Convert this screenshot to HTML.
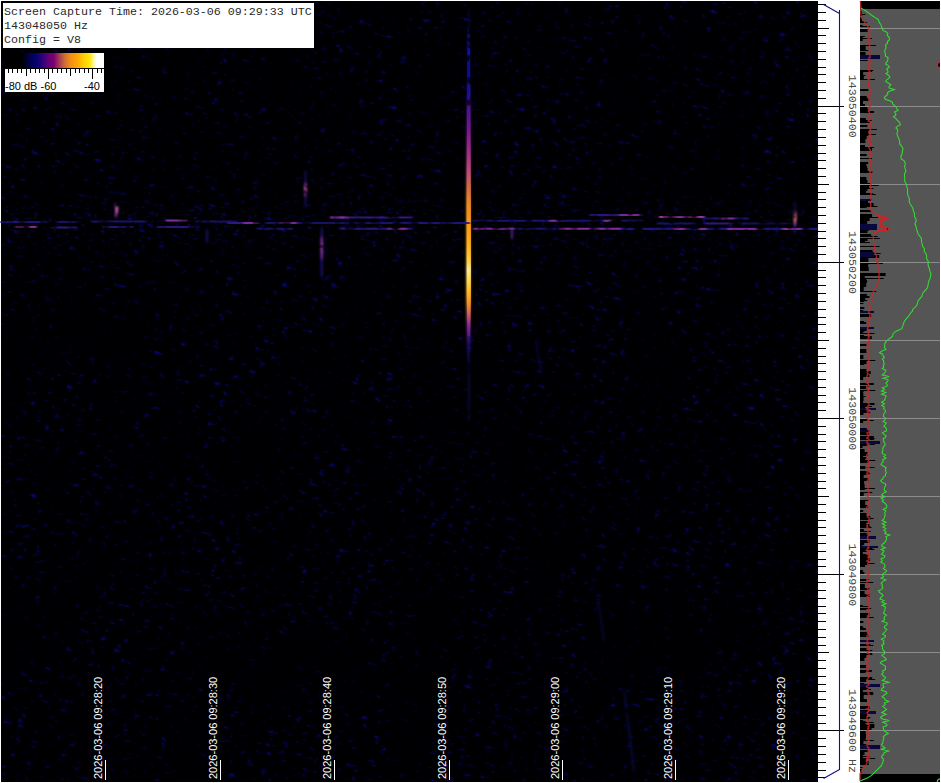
<!DOCTYPE html>
<html><head><meta charset="utf-8"><title>Spectrogram</title>
<style>
html,body{margin:0;padding:0;background:#fff;overflow:hidden}
body{width:941px;height:783px;position:relative;font-family:"Liberation Sans",sans-serif}
svg{position:absolute;left:0;top:0;display:block}
.mono{font-family:"Liberation Mono",monospace;font-size:11.67px}
.sans{font-family:"Liberation Sans",sans-serif;font-size:11px}
</style></head><body>
<svg width="941" height="783" viewBox="0 0 941 783">
<defs>
<filter id="noise" x="0" y="0" width="100%" height="100%" color-interpolation-filters="sRGB">
<feTurbulence type="fractalNoise" baseFrequency="0.125 0.22" numOctaves="3" seed="3" result="t"/>
<feColorMatrix in="t" type="matrix" values="0 0 0 0 0.03  0 0 0 0 0.03  0 0 0 0 0.58  3.3 0 0 0 -2.11" result="p"/>
<feTurbulence type="fractalNoise" baseFrequency="0.02 0.011" numOctaves="2" seed="14" result="lf"/>
<feColorMatrix in="lf" type="matrix" values="0 0 0 0 1  0 0 0 0 1  0 0 0 0 1  2.6 0 0 0 -0.55" result="m"/>
<feComposite in="p" in2="m" operator="arithmetic" k1="1" k2="0" k3="0" k4="0"/>
</filter>
<filter id="noise2" x="0" y="0" width="100%" height="100%" color-interpolation-filters="sRGB">
<feTurbulence type="fractalNoise" baseFrequency="0.15 0.24" numOctaves="3" seed="21" result="t"/>
<feColorMatrix in="t" type="matrix" values="0 0 0 0 0.06  0 0 0 0 0.04  0 0 0 0 0.5  2.8 0 0 0 -1.72"/>
</filter>
<linearGradient id="bandfade" x1="0" y1="0" x2="0" y2="1"><stop offset="0" stop-color="#fff" stop-opacity="0"/><stop offset="0.4" stop-color="#fff" stop-opacity="1"/><stop offset="0.6" stop-color="#fff" stop-opacity="1"/><stop offset="1" stop-color="#fff" stop-opacity="0"/></linearGradient>
<mask id="bandmask" maskUnits="userSpaceOnUse" x="1" y="190" width="817" height="70"><rect x="1" y="190" width="817" height="70" fill="url(#bandfade)"/></mask>
<clipPath id="specclip"><rect x="1" y="1" width="817" height="781"/></clipPath>
<filter id="b1" x="-50%" y="-50%" width="200%" height="200%"><feGaussianBlur stdDeviation="0.8"/></filter>
<filter id="b2" x="-50%" y="-50%" width="200%" height="200%"><feGaussianBlur stdDeviation="1.5"/></filter>
<filter id="bh" x="-2%" y="-100%" width="104%" height="300%" color-interpolation-filters="sRGB">
<feGaussianBlur in="SourceGraphic" stdDeviation="1.2 0.7" result="g"/>
<feTurbulence type="fractalNoise" baseFrequency="0.09 0.10" numOctaves="2" seed="8" result="n"/>
<feColorMatrix in="n" type="matrix" values="0 0 0 0 1  0 0 0 0 1  0 0 0 0 1  3.4 0 0 0 -0.85" result="m"/>
<feComposite in="g" in2="m" operator="in"/>
</filter>
<filter id="bv" x="-2%" y="-2%" width="104%" height="104%" color-interpolation-filters="sRGB">
<feGaussianBlur in="SourceGraphic" stdDeviation="0.8 1.6" result="g"/>
<feTurbulence type="fractalNoise" baseFrequency="0.10 0.12" numOctaves="2" seed="4" result="n"/>
<feColorMatrix in="n" type="matrix" values="0 0 0 0 1  0 0 0 0 1  0 0 0 0 1  3.2 0 0 0 -0.45" result="m"/>
<feComposite in="g" in2="m" operator="in"/>
</filter>
<linearGradient id="streak" gradientUnits="userSpaceOnUse" x1="0" y1="24" x2="0" y2="390">
<stop offset="0.0000" stop-color="#050530" stop-opacity="0.0"/><stop offset="0.0164" stop-color="#0c0c70" stop-opacity="0.8"/><stop offset="0.0710" stop-color="#12129a" stop-opacity="0.95"/><stop offset="0.1257" stop-color="#10108a" stop-opacity="0.85"/><stop offset="0.1803" stop-color="#18129a" stop-opacity="0.95"/><stop offset="0.2077" stop-color="#2a1088" stop-opacity="0.95"/><stop offset="0.2295" stop-color="#4a1290" stop-opacity="1"/><stop offset="0.2896" stop-color="#75188e" stop-opacity="1"/><stop offset="0.3443" stop-color="#9a2a86" stop-opacity="1"/><stop offset="0.3989" stop-color="#b8487a" stop-opacity="1"/><stop offset="0.4536" stop-color="#d4703c" stop-opacity="1"/><stop offset="0.4945" stop-color="#ea8a22" stop-opacity="1"/><stop offset="0.5492" stop-color="#f89a18" stop-opacity="1"/><stop offset="0.6038" stop-color="#ffb018" stop-opacity="1"/><stop offset="0.6503" stop-color="#ffd040" stop-opacity="1"/><stop offset="0.6721" stop-color="#ffe890" stop-opacity="1"/><stop offset="0.6995" stop-color="#ffd850" stop-opacity="1"/><stop offset="0.7322" stop-color="#ffb820" stop-opacity="1"/><stop offset="0.7678" stop-color="#f08a28" stop-opacity="1"/><stop offset="0.7951" stop-color="#c85a60" stop-opacity="1"/><stop offset="0.8224" stop-color="#8a2a90" stop-opacity="1"/><stop offset="0.8579" stop-color="#4a1890" stop-opacity="1"/><stop offset="0.8852" stop-color="#1c1080" stop-opacity="0.8"/><stop offset="0.9317" stop-color="#0c0c60" stop-opacity="0.5"/><stop offset="1.0000" stop-color="#050530" stop-opacity="0"/></linearGradient>
<linearGradient id="cbar" x1="0" y1="0" x2="1" y2="0"><stop offset="0.000" stop-color="#000000"/><stop offset="0.172" stop-color="#000000"/><stop offset="0.232" stop-color="#000040"/><stop offset="0.313" stop-color="#020272"/><stop offset="0.374" stop-color="#2c0078"/><stop offset="0.434" stop-color="#5c0078"/><stop offset="0.495" stop-color="#800070"/><stop offset="0.545" stop-color="#a03858"/><stop offset="0.596" stop-color="#c86838"/><stop offset="0.657" stop-color="#f08c18"/><stop offset="0.727" stop-color="#ffa408"/><stop offset="0.808" stop-color="#ffd400"/><stop offset="0.859" stop-color="#ffe610"/><stop offset="0.899" stop-color="#fff8b0"/><stop offset="0.929" stop-color="#ffffff"/><stop offset="1.000" stop-color="#ffffff"/></linearGradient>
</defs>
<rect x="0" y="0" width="941" height="783" fill="#ffffff"/>
<rect x="1" y="1" width="817" height="781" fill="#000002"/>
<g clip-path="url(#specclip)"><rect x="-200" y="-200" width="1300" height="1250" transform="rotate(11 409 391)" filter="url(#noise)"/></g>
<g mask="url(#bandmask)"><rect x="1" y="190" width="817" height="70" filter="url(#noise2)"/></g>
<g filter="url(#b1)" opacity=".85">
<path d="M467.4,24 L469.8,24 L470.6,110 L471.0,200 L471.0,300 L470.4,340 L469.4,388 L467.8,388 L466.8,340 L466.2,300 L466.2,200 L466.6,110 Z" fill="url(#streak)"/>
</g>
<path d="M467.8,28 L469.8,28 L470.3,100 L470.8,200 L470.8,300 L470.0,336 L467.6,336 L466.8,300 L466.6,200 L467.2,100 Z" fill="url(#streak)"/>
<ellipse cx="469.2" cy="46.1" rx="1.6" ry="2.3" fill="#000" fill-opacity="0.57"/>
<ellipse cx="467.1" cy="33.0" rx="2.2" ry="1.7" fill="#000" fill-opacity="0.43"/>
<ellipse cx="468.9" cy="103.7" rx="2.2" ry="2.1" fill="#000" fill-opacity="0.57"/>
<ellipse cx="469.5" cy="39.4" rx="2.2" ry="2.1" fill="#000" fill-opacity="0.61"/>
<ellipse cx="467.3" cy="79.0" rx="2.1" ry="2.3" fill="#000" fill-opacity="0.46"/>
<ellipse cx="470.5" cy="30.4" rx="1.8" ry="2.5" fill="#000" fill-opacity="0.66"/>
<ellipse cx="470.7" cy="82.3" rx="1.7" ry="2.6" fill="#000" fill-opacity="0.51"/>
<ellipse cx="470.5" cy="99.1" rx="1.3" ry="1.4" fill="#000" fill-opacity="0.43"/>
<ellipse cx="468.7" cy="101.4" rx="2.0" ry="1.7" fill="#000" fill-opacity="0.53"/>
<ellipse cx="468.4" cy="57.3" rx="1.9" ry="2.3" fill="#000" fill-opacity="0.67"/>
<ellipse cx="470.7" cy="79.8" rx="2.2" ry="3.0" fill="#000" fill-opacity="0.58"/>
<ellipse cx="470.4" cy="40.4" rx="2.4" ry="2.8" fill="#000" fill-opacity="0.55"/>
<ellipse cx="467.8" cy="82.3" rx="2.2" ry="2.2" fill="#000" fill-opacity="0.45"/>
<ellipse cx="470.4" cy="32.8" rx="2.4" ry="1.4" fill="#000" fill-opacity="0.63"/>
<ellipse cx="467.6" cy="59.2" rx="1.6" ry="2.6" fill="#000" fill-opacity="0.66"/>
<ellipse cx="469.5" cy="31.4" rx="1.3" ry="2.5" fill="#000" fill-opacity="0.47"/>
<rect x="471.4" y="110" width="1.1" height="220" fill="#000" fill-opacity=".85"/>
<g filter="url(#bh)" fill="none" stroke-linecap="round">
<path d="M1,222 H40" stroke="#1e1680" stroke-width="2.1" stroke-opacity="0.92"/>
<path d="M16,227 H36" stroke="#8a2a9a" stroke-width="2.1" stroke-opacity="1.00"/>
<path d="M44,222 H78" stroke="#1e1680" stroke-width="2.1" stroke-opacity="0.80"/>
<path d="M52,227.5 H76" stroke="#34188a" stroke-width="2.1" stroke-opacity="0.92"/>
<path d="M92,221.5 H152" stroke="#1e1680" stroke-width="2.1" stroke-opacity="0.86"/>
<path d="M104,227 H132" stroke="#34188a" stroke-width="2.1" stroke-opacity="0.80"/>
<path d="M166,220.5 H186" stroke="#80309a" stroke-width="2.1" stroke-opacity="1.00"/>
<path d="M158,227 H192" stroke="#34188a" stroke-width="2.1" stroke-opacity="0.86"/>
<path d="M196,221.5 H236" stroke="#1e1680" stroke-width="2.1" stroke-opacity="0.80"/>
<path d="M228,223 H262" stroke="#34188a" stroke-width="2.1" stroke-opacity="0.92"/>
<path d="M244,223 H256" stroke="#7a2a9a" stroke-width="2.1" stroke-opacity="1.00"/>
<path d="M262,223 H330" stroke="#1e1680" stroke-width="2.1" stroke-opacity="0.80"/>
<path d="M280,223 H296" stroke="#7a2a9a" stroke-width="2.1" stroke-opacity="0.98"/>
<path d="M258,228.7 H292" stroke="#1e1680" stroke-width="2.1" stroke-opacity="0.80"/>
<path d="M331,217.5 H412" stroke="#34188a" stroke-width="2.1" stroke-opacity="0.98"/>
<path d="M331,217.5 H348" stroke="#8a309a" stroke-width="2.1" stroke-opacity="1.00"/>
<path d="M332,223 H470" stroke="#1e1680" stroke-width="2.1" stroke-opacity="0.86"/>
<path d="M340,228.8 H412" stroke="#34188a" stroke-width="2.1" stroke-opacity="0.86"/>
<path d="M388,228.8 H406" stroke="#7a2a9a" stroke-width="2.1" stroke-opacity="0.98"/>
<path d="M420,223 H466" stroke="#1e1680" stroke-width="2.1" stroke-opacity="0.69"/>
<path d="M473,220.7 H560" stroke="#1e1680" stroke-width="2.1" stroke-opacity="0.86"/>
<path d="M474,228.7 H514" stroke="#7a2a9a" stroke-width="2.1" stroke-opacity="1.00"/>
<path d="M550,220.7 H562" stroke="#7a2a9a" stroke-width="2.1" stroke-opacity="0.98"/>
<path d="M518,228.7 H556" stroke="#1e1680" stroke-width="2.1" stroke-opacity="0.80"/>
<path d="M560,228.7 H622" stroke="#80309a" stroke-width="2.1" stroke-opacity="1.00"/>
<path d="M562,220.7 H642" stroke="#1e1680" stroke-width="2.1" stroke-opacity="0.80"/>
<path d="M604,220.7 H616" stroke="#7a2a9a" stroke-width="2.1" stroke-opacity="0.98"/>
<path d="M590,215 H642" stroke="#34188a" stroke-width="2.1" stroke-opacity="0.86"/>
<path d="M620,215 H640" stroke="#7a2a9a" stroke-width="2.1" stroke-opacity="0.92"/>
<path d="M622,228.9 H818" stroke="#1e1680" stroke-width="2.1" stroke-opacity="0.92"/>
<path d="M660,217 H704" stroke="#7c2e9a" stroke-width="2.1" stroke-opacity="1.00"/>
<path d="M660,217 H676" stroke="#a23a9a" stroke-width="2.1" stroke-opacity="1.00"/>
<path d="M690,217 H702" stroke="#a23a9a" stroke-width="2.1" stroke-opacity="1.00"/>
<path d="M704,218.5 H748" stroke="#1e1680" stroke-width="2.1" stroke-opacity="0.92"/>
<path d="M722,218.5 H734" stroke="#7a2a9a" stroke-width="2.1" stroke-opacity="0.92"/>
<path d="M658,223.5 H694" stroke="#1e1680" stroke-width="2.1" stroke-opacity="0.80"/>
<path d="M706,223.5 H732" stroke="#34188a" stroke-width="2.1" stroke-opacity="0.92"/>
<path d="M740,223.5 H790" stroke="#1e1680" stroke-width="2.1" stroke-opacity="0.69"/>
<path d="M674,229 H686" stroke="#7a2a9a" stroke-width="2.1" stroke-opacity="1.00"/>
<path d="M698,229 H706" stroke="#7a2a9a" stroke-width="2.1" stroke-opacity="1.00"/>
<path d="M728,229 H762" stroke="#7a2a9a" stroke-width="2.1" stroke-opacity="1.00"/>
<path d="M783,229 H802" stroke="#86309a" stroke-width="2.1" stroke-opacity="1.00"/>
</g>
<g filter="url(#bv)" fill="none" stroke-linecap="round">
<path d="M305.5,172 V206" stroke="#1a1490" stroke-width="2" stroke-opacity="0.7"/>
<path d="M305.5,184 V195" stroke="#8a309a" stroke-width="2.4" stroke-opacity="0.95"/>
<path d="M305.5,187 V191" stroke="#d060a0" stroke-width="2" stroke-opacity="0.9"/>
<path d="M321.8,228 V276" stroke="#20168e" stroke-width="2.2" stroke-opacity="0.8"/>
<path d="M321.8,238 V258" stroke="#7a2a9a" stroke-width="2.4" stroke-opacity="0.95"/>
<path d="M321.8,243 V252" stroke="#a040a0" stroke-width="2" stroke-opacity="0.8"/>
<path d="M116,205 V216" stroke="#80309a" stroke-width="2.6" stroke-opacity="0.9"/>
<path d="M117,207 V212" stroke="#d860a0" stroke-width="2.4" stroke-opacity="0.95"/>
<path d="M795,203 V232" stroke="#1e1680" stroke-width="2.2" stroke-opacity="0.8"/>
<path d="M795,212 V224" stroke="#b04898" stroke-width="2.6" stroke-opacity="0.95"/>
<path d="M795,216 V220" stroke="#ff9070" stroke-width="2.4" stroke-opacity="0.95"/>
<path d="M207,230 V242" stroke="#1e1680" stroke-width="2" stroke-opacity="0.7"/>
<path d="M512,228 V238" stroke="#5a249a" stroke-width="2.4" stroke-opacity="0.8"/>
<path d="M469,375 V420" stroke="#10106a" stroke-width="2" stroke-opacity="0.5"/>
<path d="M469,10 V26" stroke="#10106a" stroke-width="2" stroke-opacity="0.4"/>
<path d="M624,690 L634,770" stroke="#10107a" stroke-width="2" stroke-opacity=".5"/>
<path d="M598,600 L604,640" stroke="#10107a" stroke-width="2" stroke-opacity=".35"/>
<path d="M536,340 L541,372" stroke="#10107a" stroke-width="2" stroke-opacity=".4"/>
</g>
<rect x="3" y="3" width="311" height="45" fill="#ffffff"/>
<text class="mono" x="4" y="15" fill="#2a2a2a" xml:space="preserve">Screen Capture Time: 2026-03-06 09:29:33 UTC</text>
<text class="mono" x="4" y="29" fill="#2a2a2a" xml:space="preserve">143048050 Hz</text>
<text class="mono" x="4" y="43" fill="#2a2a2a" xml:space="preserve">Config = V8</text>
<rect x="5" y="53" width="99" height="15" fill="url(#cbar)"/><rect x="5" y="68" width="99" height="1" fill="#000"/>
<rect x="5" y="69" width="99" height="23" fill="#ffffff"/>
<path d="M8.5,69 v4 M12.5,69 v4 M17.5,69 v4 M21.5,69 v4 M26.5,69 v7 M30.5,69 v4 M35.5,69 v4 M39.5,69 v4 M44.5,69 v4 M48.5,69 v10 M52.5,69 v4 M57.5,69 v4 M61.5,69 v4 M66.5,69 v4 M70.5,69 v7 M75.5,69 v4 M79.5,69 v4 M84.5,69 v4 M88.5,69 v4 M92.5,69 v10 M97.5,69 v4 M101.5,69 v4" stroke="#000" stroke-width="1" fill="none" shape-rendering="crispEdges"/>
<text class="sans" x="5" y="90" fill="#000">-80 dB -60</text>
<text class="sans" x="84" y="90" fill="#000">-40</text>
<rect x="105" y="760" width="1" height="20" fill="#ffffff"/>
<text class="sans" transform="translate(102.4,779) rotate(-90)" fill="#ffffff">2026-03-06 09:28:20</text>
<rect x="220" y="760" width="1" height="20" fill="#ffffff"/>
<text class="sans" transform="translate(217.4,779) rotate(-90)" fill="#ffffff">2026-03-06 09:28:30</text>
<rect x="334" y="760" width="1" height="20" fill="#ffffff"/>
<text class="sans" transform="translate(331.4,779) rotate(-90)" fill="#ffffff">2026-03-06 09:28:40</text>
<rect x="449" y="760" width="1" height="20" fill="#ffffff"/>
<text class="sans" transform="translate(446.4,779) rotate(-90)" fill="#ffffff">2026-03-06 09:28:50</text>
<rect x="562" y="760" width="1" height="20" fill="#ffffff"/>
<text class="sans" transform="translate(559.4,779) rotate(-90)" fill="#ffffff">2026-03-06 09:29:00</text>
<rect x="675" y="760" width="1" height="20" fill="#ffffff"/>
<text class="sans" transform="translate(672.4,779) rotate(-90)" fill="#ffffff">2026-03-06 09:29:10</text>
<rect x="788" y="760" width="1" height="20" fill="#ffffff"/>
<text class="sans" transform="translate(785.4,779) rotate(-90)" fill="#ffffff">2026-03-06 09:29:20</text>
<rect x="818" y="1" width="42" height="781" fill="#ffffff"/>
<path d="M818,4.5 h8 M818,12.5 h8 M818,20.5 h8 M818,28.5 h11 M818,35.5 h8 M818,43.5 h8 M818,51.5 h8 M818,59.5 h8 M818,67.5 h8 M818,74.5 h8 M818,82.5 h8 M818,90.5 h8 M818,98.5 h8 M818,106.5 h26 M818,113.5 h8 M818,121.5 h8 M818,129.5 h8 M818,137.5 h8 M818,145.5 h8 M818,153.5 h8 M818,160.5 h8 M818,168.5 h8 M818,176.5 h8 M818,184.5 h11 M818,192.5 h8 M818,199.5 h8 M818,207.5 h8 M818,215.5 h8 M818,223.5 h8 M818,231.5 h8 M818,238.5 h8 M818,246.5 h8 M818,254.5 h8 M818,262.5 h26 M818,270.5 h8 M818,277.5 h8 M818,285.5 h8 M818,293.5 h8 M818,301.5 h8 M818,309.5 h8 M818,317.5 h8 M818,324.5 h8 M818,332.5 h8 M818,340.5 h11 M818,348.5 h8 M818,356.5 h8 M818,363.5 h8 M818,371.5 h8 M818,379.5 h8 M818,387.5 h8 M818,395.5 h8 M818,402.5 h8 M818,410.5 h8 M818,418.5 h26 M818,426.5 h8 M818,434.5 h8 M818,441.5 h8 M818,449.5 h8 M818,457.5 h8 M818,465.5 h8 M818,473.5 h8 M818,481.5 h8 M818,488.5 h8 M818,496.5 h11 M818,504.5 h8 M818,512.5 h8 M818,520.5 h8 M818,527.5 h8 M818,535.5 h8 M818,543.5 h8 M818,551.5 h8 M818,559.5 h8 M818,566.5 h8 M818,574.5 h26 M818,582.5 h8 M818,590.5 h8 M818,598.5 h8 M818,606.5 h8 M818,613.5 h8 M818,621.5 h8 M818,629.5 h8 M818,637.5 h8 M818,645.5 h8 M818,652.5 h11 M818,660.5 h8 M818,668.5 h8 M818,676.5 h8 M818,684.5 h8 M818,691.5 h8 M818,699.5 h8 M818,707.5 h8 M818,715.5 h8 M818,723.5 h8 M818,730.5 h26 M818,738.5 h8 M818,746.5 h8 M818,754.5 h8 M818,762.5 h8 M818,770.5 h8 M818,777.5 h8" stroke="#000" stroke-width="1" fill="none" shape-rendering="crispEdges"/>
<path d="M823.5,4.5 L839.5,13.5 M839.5,10 V770 M839.5,769.5 L823.5,778.5" stroke="#10108a" stroke-width="1.1" fill="none"/>
<text class="mono" transform="translate(849.3,74.8) rotate(90)" fill="#4a4a4a" xml:space="preserve">143050400</text>
<text class="mono" transform="translate(849.3,231.0) rotate(90)" fill="#4a4a4a" xml:space="preserve">143050200</text>
<text class="mono" transform="translate(849.3,387.2) rotate(90)" fill="#4a4a4a" xml:space="preserve">143050000</text>
<text class="mono" transform="translate(849.3,543.4) rotate(90)" fill="#4a4a4a" xml:space="preserve">143049800</text>
<text class="mono" transform="translate(849.3,689.1) rotate(90)" fill="#4a4a4a" xml:space="preserve">143049600 Hz</text>
<rect x="860" y="1" width="80" height="781" fill="#555555"/>
<rect x="860" y="1" width="80" height="8" fill="#000"/>
<rect x="860" y="774" width="80" height="8" fill="#000"/>
<path d="M860,11 h2.0 v4 H860 z M860,17 h2.0 v4 H860 z M860,21 h4.1 v1 H860 z M860,22 h2.0 v1 H860 z M860,25 h2.5 v1 H860 z M860,28 h4.9 v1 H860 z M860,29 h7.6 v3 H860 z M860,36 h4.8 v1 H860 z M860,37 h2.7 v4 H860 z M860,45 h15.9 v1 H860 z M860,46 h5.6 v1 H860 z M860,47 h5.7 v3 H860 z M860,50 h8.4 v1 H860 z M860,52 h5.5 v4 H860 z M860,58 h9.0 v1 H860 z M860,60 h7.6 v1 H860 z M860,70 h7.0 v1 H860 z M860,71 h5.5 v1 H860 z M860,72 h3.2 v3 H860 z M860,75 h5.4 v1 H860 z M860,76 h3.8 v3 H860 z M860,89 h8.3 v2 H860 z M860,96 h6.7 v1 H860 z M860,97 h6.9 v1 H860 z M860,98 h9.1 v3 H860 z M860,101 h3.0 v3 H860 z M860,104 h5.0 v3 H860 z M860,107 h8.6 v4 H860 z M860,111 h14.0 v2 H860 z M860,118 h5.8 v3 H860 z M860,121 h9.9 v2 H860 z M860,125 h7.3 v2 H860 z M860,129 h8.9 v4 H860 z M860,133 h8.3 v3 H860 z M860,136 h6.7 v3 H860 z M860,139 h5.4 v4 H860 z M860,145 h5.0 v3 H860 z M860,148 h12.0 v3 H860 z M860,154 h6.6 v2 H860 z M860,158 h11.9 v1 H860 z M860,162 h8.2 v2 H860 z M860,164 h6.3 v2 H860 z M860,166 h7.1 v2 H860 z M860,168 h7.6 v3 H860 z M860,171 h12.3 v2 H860 z M860,177 h6.4 v3 H860 z M860,180 h7.4 v3 H860 z M860,183 h10.2 v2 H860 z M860,185 h9.1 v4 H860 z M860,189 h7.4 v2 H860 z M860,191 h6.1 v2 H860 z M860,193 h12.8 v1 H860 z M860,194 h15.7 v1 H860 z M860,199 h10.4 v2 H860 z M860,201 h8.0 v2 H860 z M860,203 h13.6 v3 H860 z M860,206 h6.6 v2 H860 z M860,210 h11.3 v2 H860 z M860,214 h12.1 v3 H860 z M860,217 h11.3 v1 H860 z M860,218 h9.6 v3 H860 z M860,221 h7.2 v4 H860 z M860,225 h7.9 v1 H860 z M860,226 h10.2 v2 H860 z M860,228 h8.0 v2 H860 z M860,230 h8.7 v1 H860 z M860,231 h7.5 v2 H860 z M860,234 h11.1 v2 H860 z M860,236 h17.6 v1 H860 z M860,238 h19.8 v1 H860 z M860,239 h7.6 v2 H860 z M860,241 h4.9 v1 H860 z M860,242 h9.8 v1 H860 z M860,246 h12.0 v1 H860 z M860,250 h12.6 v2 H860 z M860,254 h10.0 v1 H860 z M860,255 h19.2 v3 H860 z M860,258 h8.4 v4 H860 z M860,262 h7.8 v1 H860 z M860,263 h22.9 v1 H860 z M860,264 h8.3 v1 H860 z M860,265 h8.1 v2 H860 z M860,267 h8.7 v4 H860 z M860,273 h25.6 v3 H860 z M860,276 h4.7 v2 H860 z M860,278 h6.2 v2 H860 z M860,280 h7.1 v3 H860 z M860,283 h6.2 v4 H860 z M860,287 h3.7 v4 H860 z M860,291 h16.2 v1 H860 z M860,294 h6.8 v2 H860 z M860,296 h9.4 v2 H860 z M860,298 h5.2 v2 H860 z M860,300 h7.1 v1 H860 z M860,301 h4.3 v1 H860 z M860,303 h3.4 v1 H860 z M860,307 h4.3 v2 H860 z M860,310 h3.2 v3 H860 z M860,314 h11.1 v3 H860 z M860,321 h4.1 v1 H860 z M860,322 h6.1 v1 H860 z M860,323 h6.3 v1 H860 z M860,327 h6.6 v4 H860 z M860,331 h4.3 v1 H860 z M860,332 h2.9 v1 H860 z M860,333 h14.5 v1 H860 z M860,335 h3.9 v1 H860 z M860,336 h11.8 v3 H860 z M860,344 h6.5 v2 H860 z M860,349 h6.4 v4 H860 z M860,355 h3.4 v4 H860 z M860,360 h6.6 v4 H860 z M860,364 h4.2 v1 H860 z M860,369 h6.4 v2 H860 z M860,371 h10.7 v3 H860 z M860,374 h9.3 v3 H860 z M860,377 h3.2 v3 H860 z M860,383 h13.8 v2 H860 z M860,386 h8.4 v1 H860 z M860,387 h6.8 v2 H860 z M860,390 h3.6 v2 H860 z M860,392 h3.1 v1 H860 z M860,393 h3.4 v1 H860 z M860,394 h3.3 v2 H860 z M860,396 h5.5 v1 H860 z M860,397 h3.6 v4 H860 z M860,401 h3.1 v2 H860 z M860,403 h14.5 v2 H860 z M860,405 h8.7 v1 H860 z M860,407 h5.0 v2 H860 z M860,409 h8.2 v1 H860 z M860,410 h8.5 v3 H860 z M860,413 h3.4 v2 H860 z M860,418 h7.8 v1 H860 z M860,419 h6.9 v2 H860 z M860,421 h3.1 v2 H860 z M860,428 h7.5 v3 H860 z M860,431 h9.1 v4 H860 z M860,436 h13.8 v4 H860 z M860,443 h7.9 v3 H860 z M860,446 h2.5 v2 H860 z M860,449 h4.6 v3 H860 z M860,452 h7.7 v4 H860 z M860,456 h3.1 v1 H860 z M860,457 h6.3 v2 H860 z M860,459 h5.1 v1 H860 z M860,460 h9.0 v3 H860 z M860,466 h5.1 v3 H860 z M860,471 h8.9 v4 H860 z M860,475 h3.7 v3 H860 z M860,478 h8.4 v3 H860 z M860,481 h4.1 v3 H860 z M860,484 h4.6 v3 H860 z M860,487 h4.8 v3 H860 z M860,493 h3.7 v3 H860 z M860,500 h9.3 v1 H860 z M860,501 h5.2 v4 H860 z M860,505 h8.1 v3 H860 z M860,510 h3.2 v2 H860 z M860,513 h6.4 v3 H860 z M860,516 h10.3 v4 H860 z M860,521 h9.5 v2 H860 z M860,523 h6.3 v1 H860 z M860,524 h9.3 v1 H860 z M860,525 h9.3 v1 H860 z M860,526 h9.2 v1 H860 z M860,529 h3.8 v2 H860 z M860,533 h8.1 v3 H860 z M860,536 h12.2 v2 H860 z M860,538 h4.1 v1 H860 z M860,540 h9.5 v3 H860 z M860,543 h4.2 v2 H860 z M860,545 h2.4 v1 H860 z M860,546 h2.6 v2 H860 z M860,548 h3.0 v2 H860 z M860,550 h5.6 v1 H860 z M860,551 h6.7 v1 H860 z M860,552 h2.8 v2 H860 z M860,554 h8.6 v4 H860 z M860,558 h10.1 v3 H860 z M860,561 h8.2 v4 H860 z M860,565 h5.1 v2 H860 z M860,570 h3.0 v2 H860 z M860,572 h4.4 v2 H860 z M860,579 h8.8 v1 H860 z M860,580 h6.0 v1 H860 z M860,582 h10.9 v1 H860 z M860,584 h4.8 v4 H860 z M860,588 h9.4 v2 H860 z M860,591 h4.6 v3 H860 z M860,594 h9.4 v3 H860 z M860,605 h2.8 v1 H860 z M860,606 h8.8 v1 H860 z M860,609 h9.1 v1 H860 z M860,613 h9.5 v3 H860 z M860,616 h7.3 v1 H860 z M860,617 h6.2 v1 H860 z M860,621 h3.4 v2 H860 z M860,626 h2.7 v1 H860 z M860,627 h3.4 v1 H860 z M860,628 h5.9 v2 H860 z M860,632 h7.5 v3 H860 z M860,635 h8.4 v2 H860 z M860,641 h6.8 v1 H860 z M860,648 h6.6 v3 H860 z M860,652 h12.3 v3 H860 z M860,655 h6.3 v3 H860 z M860,658 h4.4 v3 H860 z M860,665 h6.0 v3 H860 z M860,670 h11.8 v2 H860 z M860,672 h5.6 v1 H860 z M860,677 h12.2 v2 H860 z M860,679 h6.3 v3 H860 z M860,683 h4.2 v2 H860 z M860,687 h8.8 v2 H860 z M860,689 h3.0 v3 H860 z M860,692 h13.2 v3 H860 z M860,695 h3.7 v4 H860 z M860,699 h7.0 v3 H860 z M860,706 h9.6 v3 H860 z M860,710 h8.1 v1 H860 z M860,711 h12.1 v3 H860 z M860,714 h7.1 v3 H860 z M860,717 h9.2 v2 H860 z M860,720 h3.1 v1 H860 z M860,721 h5.5 v3 H860 z M860,724 h14.4 v3 H860 z M860,727 h7.0 v1 H860 z M860,728 h11.5 v2 H860 z M860,730 h5.8 v4 H860 z M860,734 h6.0 v4 H860 z M860,738 h5.7 v3 H860 z M860,741 h3.4 v3 H860 z M860,744 h7.9 v3 H860 z M860,750 h8.6 v2 H860 z M860,752 h4.5 v3 H860 z M860,755 h2.8 v3 H860 z M860,759 h5.9 v2 H860 z M860,761 h8.6 v4 H860 z M860,767 h2.5 v1 H860 z M860,769 h2.0 v4 H860 z" fill="#000"/>
<path d="M860,689.5 h11.0 M860,617.5 h13.7 M860,360.5 h15.4 M860,548.5 h12.5 M860,740.5 h13.8 M860,26.5 h9.8 M860,518.5 h13.6 M860,563.5 h14.5 M860,488.5 h14.9 M860,56.5 h11.6 M860,14.5 h5.3 M860,134.5 h15.9 M860,185.5 h18.7 M860,531.5 h10.7 M860,420.5 h13.6 M860,406.5 h11.9 M860,246.5 h19.7 M860,22.5 h6.9 M860,253.5 h20.7 M860,527.5 h11.6 M860,608.5 h11.1 M860,764.5 h8.1 M860,582.5 h13.2 M860,467.5 h14.5 M860,756.5 h9.4 M860,278.5 h23.7 M860,14.5 h2.9 M860,70.5 h13.2 M860,206.5 h17.4 M860,120.5 h11.6 M860,460.5 h15.3 M860,492.5 h12.3 M860,546.5 h9.5 M860,727.5 h14.4 M860,650.5 h12.3 M860,645.5 h13.3 M860,745.5 h15.4 M860,644.5 h10.4 M860,679.5 h15.2 M860,526.5 h10.4 M860,79.5 h14.9 M860,217.5 h25.2 M860,390.5 h15.2 M860,188.5 h13.5 M860,15.5 h2.2 M860,71.5 h12.1 M860,758.5 h15.1 M860,412.5 h10.2 M860,129.5 h16.9 M860,717.5 h10.3 M860,147.5 h13.9 M860,473.5 h10.0 M860,38.5 h11.9 M860,549.5 h14.4 M860,722.5 h13.8 M860,711.5 h10.9 M860,106.5 h16.2 M860,444.5 h14.6 M860,438.5 h14.8 M860,686.5 h12.9" stroke="#000" stroke-width="1" fill="none"/>
<rect x="860" y="55" width="20" height="4" fill="#08083c"/>
<rect x="860" y="224" width="17" height="6" fill="#08083c"/>
<rect x="860" y="252" width="14" height="5" fill="#08083c"/>
<rect x="860" y="199" width="12" height="2" fill="#08083c"/>
<rect x="860" y="311" width="14" height="2" fill="#08083c"/>
<rect x="860" y="327" width="14" height="2" fill="#08083c"/>
<rect x="860" y="408" width="16" height="2" fill="#08083c"/>
<rect x="860" y="441" width="20" height="3" fill="#08083c"/>
<rect x="860" y="536" width="16" height="3" fill="#08083c"/>
<rect x="860" y="546" width="18" height="2" fill="#08083c"/>
<rect x="860" y="684" width="20" height="3" fill="#08083c"/>
<rect x="860" y="711" width="16" height="3" fill="#08083c"/>
<rect x="860" y="745" width="20" height="4" fill="#08083c"/>
<rect x="860" y="640" width="14" height="2" fill="#08083c"/>
<rect x="860" y="430" width="10" height="2" fill="#08083c"/>
<path d="M860,28.5 H940 M860,106.5 H940 M860,184.5 H940 M860,262.5 H940 M860,340.5 H940 M860,418.5 H940 M860,496.5 H940 M860,574.5 H940 M860,652.5 H940 M860,730.5 H940" stroke="#8c8c8c" stroke-width="1" fill="none" shape-rendering="crispEdges"/>
<polyline fill="none" stroke="#c62828" stroke-opacity=".88" stroke-width="1.3" points="860.5,1 860.5,2 860.6,3 860.6,4 860.6,5 860.7,6 860.7,7 860.7,8 860.8,9 860.8,10 860.8,11 860.8,12 860.9,13 860.9,14 860.9,15 861.0,16 861.0,17 861.7,18 862.3,19 863.0,20 863.8,21 864.5,22 865.2,23 866.0,24 866.8,25 867.7,26 868.5,27 868.7,28 868.8,29 869.0,30 870.0,31 869.7,32 869.7,33 868.1,34 869.2,35 869.6,36 870.1,37 867.6,38 870.0,39 870.4,40 868.0,41 869.4,42 869.6,43 868.8,44 869.9,45 869.4,46 868.0,47 869.1,48 869.6,49 870.3,50 869.7,51 869.6,52 868.9,53 870.0,54 870.2,55 869.7,56 870.2,57 869.0,58 868.6,59 870.5,60 869.7,61 868.6,62 870.2,63 868.3,64 869.2,65 870.2,66 868.5,67 870.4,68 868.7,69 868.7,70 869.2,71 870.4,72 867.5,73 868.9,74 867.8,75 869.0,76 869.8,77 869.0,78 867.7,79 869.5,80 868.4,81 867.7,82 868.5,83 868.0,84 868.6,85 869.8,86 867.6,87 869.4,88 869.8,89 870.3,90 870.2,91 869.8,92 870.1,93 869.5,94 867.8,95 869.0,96 870.1,97 868.1,98 868.4,99 868.8,100 869.4,101 869.3,102 870.5,103 869.1,104 870.3,105 870.1,106 869.4,107 867.9,108 868.8,109 869.0,110 868.2,111 869.6,112 869.1,113 870.8,114 870.4,115 868.9,116 868.2,117 868.9,118 870.4,119 869.4,120 868.1,121 870.9,122 870.1,123 870.8,124 869.8,125 870.7,126 869.0,127 869.5,128 870.8,129 869.7,130 869.7,131 868.5,132 869.8,133 870.9,134 869.5,135 868.9,136 870.5,137 871.1,138 868.7,139 868.6,140 869.4,141 868.5,142 870.8,143 869.7,144 871.3,145 868.8,146 868.6,147 869.0,148 869.5,149 870.3,150 870.4,151 870.8,152 868.8,153 871.5,154 869.6,155 869.6,156 870.1,157 869.5,158 870.1,159 869.7,160 870.9,161 870.5,162 871.9,163 870.6,164 870.1,165 870.4,166 870.4,167 869.1,168 870.1,169 872.0,170 871.6,171 869.4,172 870.4,173 870.0,174 871.9,175 870.2,176 871.1,177 869.6,178 870.5,179 870.6,180 870.1,181 869.8,182 871.7,183 871.0,184 870.5,185 870.6,186 871.4,187 870.4,188 871.2,189 870.8,190 870.7,191 870.6,192 871.4,193 871.0,194 870.6,195 870.9,196 870.7,197 870.7,198 870.9,199 871.2,200 871.4,201 871.2,202 870.5,203 870.6,204 871.1,205 870.6,206 870.8,207 870.8,208 871.4,209 870.5,210 871.7,211 872.5,212 874.0,213 875.7,214 878.4,215 880.5,216 883.3,217 886.8,218 884.4,219 881.5,220 881.8,221 881.5,222 880.4,223 880.6,224 879.6,225 882.4,226 884.1,227 886.3,228 888.4,229 884.1,230 880.4,231 876.8,232 873.8,233 873.8,234 874.0,235 873.4,236 873.3,237 873.0,238 873.6,239 873.4,240 873.5,241 873.4,242 873.3,243 873.3,244 874.3,245 874.5,246 874.9,247 874.3,248 875.0,249 874.6,250 875.2,251 875.6,252 875.1,253 875.4,254 876.3,255 876.6,256 876.2,257 876.3,258 876.9,259 876.5,260 877.4,261 876.9,262 878.1,263 877.8,264 877.8,265 878.0,266 878.1,267 879.0,268 878.9,269 879.0,270 879.2,271 879.1,272 878.7,273 879.4,274 879.1,275 878.6,276 878.7,277 878.9,278 879.2,279 878.7,280 879.0,281 877.8,282 878.1,283 877.1,284 877.1,285 876.6,286 876.4,287 875.6,288 874.7,289 874.4,290 873.8,291 873.2,292 873.1,293 872.6,294 872.3,295 872.0,296 871.8,297 871.5,298 871.3,299 872.3,300 872.3,301 869.1,302 868.9,303 869.2,304 869.0,305 870.8,306 869.5,307 870.8,308 870.8,309 870.0,310 869.1,311 868.6,312 869.6,313 869.8,314 870.1,315 869.6,316 870.2,317 870.4,318 868.1,319 869.1,320 868.0,321 869.5,322 868.2,323 869.8,324 868.1,325 869.1,326 868.1,327 867.4,328 867.8,329 868.8,330 869.8,331 869.3,332 868.0,333 869.2,334 867.0,335 867.9,336 869.6,337 867.8,338 869.2,339 869.5,340 869.3,341 866.7,342 869.5,343 867.7,344 868.3,345 867.1,346 868.8,347 867.3,348 868.0,349 867.0,350 867.8,351 868.9,352 868.5,353 867.0,354 867.6,355 869.0,356 869.1,357 869.3,358 868.2,359 868.9,360 868.5,361 867.3,362 869.4,363 867.8,364 867.9,365 869.1,366 867.0,367 868.9,368 867.9,369 868.0,370 868.4,371 867.2,372 867.2,373 868.6,374 867.2,375 866.9,376 866.9,377 867.8,378 867.9,379 868.5,380 866.5,381 868.5,382 866.5,383 868.6,384 868.5,385 866.9,386 866.8,387 866.6,388 868.8,389 869.0,390 867.8,391 867.1,392 866.9,393 866.6,394 868.9,395 867.8,396 869.5,397 868.1,398 868.8,399 867.5,400 867.2,401 867.0,402 868.0,403 869.0,404 869.2,405 867.5,406 868.8,407 868.3,408 866.5,409 869.5,410 867.1,411 868.1,412 867.3,413 869.4,414 867.2,415 868.5,416 867.8,417 866.7,418 868.0,419 869.3,420 867.2,421 867.7,422 867.1,423 867.8,424 867.4,425 868.9,426 867.2,427 867.4,428 867.2,429 869.2,430 868.8,431 869.5,432 866.8,433 868.2,434 867.3,435 868.1,436 868.4,437 866.6,438 868.5,439 869.1,440 866.8,441 867.4,442 866.9,443 869.3,444 867.2,445 867.5,446 867.1,447 867.8,448 868.5,449 867.6,450 866.8,451 869.0,452 868.1,453 867.7,454 866.8,455 866.8,456 867.4,457 868.2,458 866.9,459 868.7,460 868.4,461 867.6,462 869.4,463 869.1,464 867.3,465 867.8,466 869.4,467 866.5,468 867.9,469 868.7,470 869.5,471 866.8,472 868.1,473 866.7,474 869.5,475 866.8,476 868.2,477 868.4,478 868.0,479 867.7,480 867.1,481 868.5,482 867.9,483 868.1,484 867.1,485 868.6,486 866.6,487 868.4,488 867.7,489 869.4,490 867.9,491 868.2,492 869.2,493 869.2,494 867.3,495 867.2,496 868.0,497 867.3,498 867.3,499 868.3,500 869.4,501 868.1,502 869.5,503 867.8,504 868.5,505 867.9,506 866.7,507 867.0,508 867.2,509 868.1,510 869.1,511 867.0,512 867.6,513 868.6,514 868.8,515 867.8,516 867.2,517 869.3,518 869.4,519 868.4,520 868.2,521 869.1,522 867.8,523 867.0,524 867.6,525 866.8,526 867.9,527 866.7,528 867.9,529 868.5,530 867.6,531 868.3,532 869.4,533 867.2,534 868.0,535 868.5,536 867.6,537 867.4,538 868.1,539 868.7,540 867.6,541 868.9,542 869.0,543 867.6,544 867.7,545 868.3,546 867.8,547 869.0,548 867.2,549 867.0,550 868.6,551 869.3,552 867.5,553 866.6,554 868.8,555 869.2,556 867.8,557 868.1,558 869.2,559 868.5,560 866.8,561 869.5,562 867.6,563 867.7,564 868.2,565 867.6,566 867.4,567 867.2,568 867.0,569 867.5,570 869.0,571 867.4,572 867.5,573 867.2,574 869.2,575 869.2,576 868.8,577 867.5,578 866.8,579 868.0,580 869.4,581 866.8,582 866.9,583 867.5,584 868.6,585 868.8,586 867.0,587 867.1,588 867.7,589 869.5,590 867.3,591 868.4,592 869.2,593 866.6,594 868.9,595 868.3,596 866.8,597 868.8,598 868.0,599 868.6,600 868.2,601 868.6,602 868.8,603 869.0,604 869.1,605 868.2,606 869.3,607 868.6,608 869.2,609 866.8,610 868.1,611 868.5,612 868.8,613 868.6,614 869.4,615 867.5,616 868.6,617 867.1,618 867.7,619 867.0,620 868.3,621 868.0,622 869.5,623 867.7,624 867.9,625 868.7,626 867.4,627 866.6,628 867.4,629 867.7,630 868.3,631 868.8,632 867.2,633 868.9,634 868.9,635 866.8,636 866.8,637 867.7,638 868.4,639 866.8,640 867.6,641 866.9,642 869.1,643 866.6,644 868.3,645 867.5,646 868.5,647 867.3,648 869.0,649 869.5,650 868.9,651 868.4,652 867.1,653 869.3,654 868.6,655 868.0,656 869.2,657 866.7,658 867.3,659 868.4,660 868.3,661 867.2,662 866.7,663 866.8,664 867.8,665 866.7,666 869.2,667 867.8,668 866.7,669 868.7,670 866.8,671 868.1,672 867.1,673 868.3,674 868.5,675 868.2,676 869.2,677 868.0,678 868.0,679 866.8,680 866.9,681 868.0,682 867.6,683 868.5,684 869.0,685 866.6,686 866.9,687 869.1,688 868.4,689 866.9,690 866.6,691 868.8,692 867.7,693 869.5,694 868.3,695 867.9,696 867.9,697 867.8,698 867.2,699 869.0,700 867.9,701 869.3,702 869.4,703 866.9,704 868.7,705 869.3,706 868.7,707 868.6,708 866.6,709 868.5,710 868.7,711 867.8,712 866.9,713 867.5,714 869.2,715 867.7,716 866.7,717 867.3,718 866.7,719 866.7,720 866.7,721 868.5,722 868.0,723 866.7,724 869.2,725 869.3,726 867.8,727 869.0,728 867.6,729 868.3,730 867.1,731 869.5,732 866.8,733 868.5,734 869.4,735 867.4,736 866.6,737 867.7,738 868.9,739 867.7,740 869.1,741 867.5,742 866.9,743 868.3,744 866.5,745 867.8,746 867.1,747 869.0,748 868.5,749 868.9,750 868.0,751 868.0,752 867.9,753 866.7,754 869.1,755 867.0,756 868.9,757 866.6,758 869.2,759 866.7,760 866.2,761 867.2,762 866.8,763 866.4,764 866.0,765 865.2,766 864.4,767 863.6,768 862.8,769 862.0,770 861.5,771 861.0,772 860.5,773 860.0,774 860.0,775 860.0,776 860.0,777 860.0,778 860.0,779 860.0,780 860.0,781"/>
<path d="M878,217 L887,218 L881,221 L880,226 L888,229 L878,231" stroke="#d42020" stroke-width="2.2" fill="none"/>
<ellipse cx="885.5" cy="218" rx="2.6" ry="1.6" fill="#d02424"/><ellipse cx="886.5" cy="229" rx="2.6" ry="1.6" fill="#d02424"/><circle cx="887.5" cy="229" r="0.8" fill="#300"/>
<polyline fill="none" stroke="#30e030" stroke-width="1.05" stroke-linejoin="miter" points="861.0,8 863.7,9.6 866.3,11.2 868.4,12.799999999999999 870.5,14.399999999999999 872.7,15.999999999999998 875.2,17.599999999999998 878.1,19.2 878.6,20.8 879.3,22.400000000000002 880.3,24.000000000000004 881.2,25.600000000000005 881.7,27.200000000000006 882.5,28.800000000000008 882.9,30.40000000000001 886.3,32.00000000000001 887.8,33.60000000000001 887.1,35.20000000000001 888.7,36.80000000000001 889.5,38.40000000000001 889.2,40.000000000000014 887.4,41.600000000000016 887.4,43.20000000000002 885.7,44.80000000000002 885.7,46.40000000000002 886.1,48.00000000000002 885.0,49.60000000000002 884.8,51.200000000000024 884.9,52.800000000000026 885.5,54.40000000000003 885.3,56.00000000000003 888.1,57.60000000000003 887.8,59.20000000000003 887.7,60.80000000000003 886.4,62.400000000000034 885.6,64.00000000000003 888.3,65.60000000000002 889.4,67.20000000000002 886.8,68.80000000000001 887.6,70.4 888.1,72.0 886.0,73.6 888.5,75.19999999999999 889.9,76.79999999999998 888.8,78.39999999999998 886.4,79.99999999999997 885.8,81.59999999999997 888.6,83.19999999999996 890.9,84.79999999999995 889.0,86.39999999999995 889.3,87.99999999999994 894.4,89.59999999999994 889.6,91.19999999999993 887.5,92.79999999999993 887.8,94.39999999999992 885.9,95.99999999999991 884.4,97.59999999999991 885.2,99.1999999999999 889.9,100.7999999999999 892.5,102.39999999999989 892.6,103.99999999999989 894.7,105.59999999999988 896.2,107.19999999999987 896.7,108.79999999999987 898.2,110.39999999999986 894.5,111.99999999999986 895.8,113.59999999999985 895.7,115.19999999999985 893.4,116.79999999999984 895.7,118.39999999999984 896.9,119.99999999999983 898.8,121.59999999999982 900.0,123.19999999999982 900.4,124.79999999999981 897.2,126.3999999999998 895.9,127.9999999999998 897.8,129.5999999999998 897.5,131.1999999999998 897.0,133.6999999999998 897.7,136.1999999999998 898.8,138.6999999999998 899.7,141.1999999999998 899.6,143.6999999999998 901.7,146.1999999999998 903.1,148.6999999999998 902.4,151.1999999999998 902.2,153.6999999999998 900.9,156.1999999999998 901.1,158.6999999999998 904.4,161.1999999999998 905.4,163.6999999999998 904.6,166.1999999999998 905.1,168.6999999999998 905.9,171.1999999999998 904.5,173.6999999999998 904.6,176.1999999999998 904.7,178.6999999999998 904.6,181.1999999999998 906.2,183.6999999999998 906.7,186.1999999999998 907.4,188.6999999999998 907.6,191.1999999999998 907.6,193.6999999999998 908.2,196.1999999999998 909.4,198.6999999999998 909.1,201.1999999999998 910.0,203.6999999999998 911.8,206.1999999999998 913.0,208.6999999999998 913.4,211.1999999999998 914.6,213.6999999999998 914.3,216.1999999999998 915.8,218.6999999999998 916.2,221.1999999999998 914.9,223.6999999999998 916.0,226.1999999999998 916.4,228.6999999999998 917.3,231.1999999999998 918.0,233.6999999999998 919.9,236.1999999999998 921.4,238.6999999999998 921.5,241.1999999999998 922.0,243.6999999999998 922.6,246.1999999999998 924.4,248.6999999999998 924.1,251.1999999999998 925.9,253.6999999999998 926.7,256.1999999999998 926.5,258.6999999999998 928.3,261.1999999999998 928.0,263.6999999999998 928.4,266.1999999999998 929.5,268.6999999999998 929.8,271.1999999999998 931.0,273.6999999999998 930.5,276.1999999999998 930.0,278.6999999999998 928.8,281.1999999999998 928.2,283.6999999999998 927.9,286.1999999999998 926.9,288.6999999999998 924.5,291.1999999999998 922.5,293.6999999999998 921.9,296.1999999999998 919.9,298.6999999999998 917.9,301.1999999999998 917.5,303.6999999999998 916.2,306.1999999999998 913.2,308.6999999999998 912.4,311.1999999999998 910.0,313.6999999999998 908.7,316.1999999999998 906.3,318.6999999999998 904.4,321.1999999999998 903.5,323.6999999999998 902.7,326.1999999999998 901.8,328.6999999999998 896.1,331.1999999999998 893.0,333.6999999999998 892.7,336.1999999999998 889.2,338.6999999999998 886.2,341.1999999999998 884.8,343.6999999999998 884.7,346.1999999999998 884.4,347.79999999999984 886.0,349.39999999999986 882.0,350.9999999999999 879.5,352.5999999999999 882.6,354.19999999999993 883.1,355.79999999999995 884.4,357.4 882.3,359.0 883.7,360.6 883.5,362.20000000000005 884.4,363.80000000000007 883.1,365.4000000000001 883.9,367.0000000000001 882.2,368.60000000000014 885.9,370.20000000000016 885.3,371.8000000000002 884.1,373.4000000000002 882.2,375.0000000000002 889.1,376.60000000000025 883.1,378.2000000000003 888.1,379.8000000000003 887.7,381.4000000000003 885.9,383.00000000000034 887.2,384.60000000000036 887.0,386.2000000000004 882.3,387.8000000000004 884.6,389.40000000000043 881.4,391.00000000000045 885.7,392.6000000000005 881.6,394.2000000000005 886.1,395.8000000000005 885.6,397.40000000000055 885.0,399.00000000000057 884.0,400.6000000000006 881.6,402.2000000000006 884.4,403.80000000000064 881.8,405.40000000000066 884.3,407.0000000000007 883.6,408.6000000000007 885.3,410.2000000000007 885.4,411.80000000000075 884.1,413.4000000000008 883.6,415.0000000000008 883.5,416.6000000000008 885.5,418.20000000000084 885.2,419.80000000000086 883.1,421.4000000000009 886.2,423.0000000000009 885.1,424.60000000000093 883.8,426.20000000000095 885.9,427.800000000001 886.6,429.400000000001 886.2,431.000000000001 882.4,432.60000000000105 883.8,434.20000000000107 886.1,435.8000000000011 885.3,437.4000000000011 883.1,439.00000000000114 883.8,440.60000000000116 883.9,442.2000000000012 884.9,443.8000000000012 885.1,445.4000000000012 883.3,447.00000000000125 882.8,448.6000000000013 882.8,450.2000000000013 882.3,451.8000000000013 882.3,453.40000000000134 885.6,455.00000000000136 883.7,456.6000000000014 886.0,458.2000000000014 882.7,459.80000000000143 883.4,461.40000000000146 881.9,463.0000000000015 881.0,464.6000000000015 883.6,466.2000000000015 886.2,467.80000000000155 885.3,469.40000000000157 885.7,471.0000000000016 886.4,472.6000000000016 885.5,474.20000000000164 885.4,475.80000000000166 883.2,477.4000000000017 882.8,479.0000000000017 880.7,480.6000000000017 881.8,482.20000000000175 885.5,483.8000000000018 885.8,485.4000000000018 884.8,487.0000000000018 884.2,488.60000000000184 884.4,490.20000000000186 886.3,491.8000000000019 883.0,493.4000000000019 881.5,495.00000000000193 885.0,496.60000000000196 881.1,498.200000000002 883.5,499.800000000002 882.2,501.400000000002 884.9,503.00000000000205 886.1,504.60000000000207 886.9,506.2000000000021 886.6,507.8000000000021 883.2,509.40000000000214 885.9,511.00000000000216 884.7,512.6000000000022 885.2,514.2000000000022 884.9,515.8000000000022 884.5,517.4000000000023 883.9,519.0000000000023 882.1,520.6000000000023 886.0,522.2000000000023 882.1,523.8000000000023 885.4,525.4000000000024 882.9,527.0000000000024 885.9,528.6000000000024 883.8,530.2000000000024 886.0,531.8000000000025 884.8,533.4000000000025 889.8,535.0000000000025 885.9,536.6000000000025 886.7,538.2000000000025 886.1,539.8000000000026 885.6,541.4000000000026 884.1,543.0000000000026 882.0,544.6000000000026 881.7,546.2000000000027 885.2,547.8000000000027 881.2,549.4000000000027 884.0,551.0000000000027 882.9,552.6000000000028 881.5,554.2000000000028 884.8,555.8000000000028 884.4,557.4000000000028 880.9,559.0000000000028 882.4,560.6000000000029 880.8,562.2000000000029 884.1,563.8000000000029 884.9,565.4000000000029 884.8,567.000000000003 883.3,568.600000000003 886.3,570.200000000003 886.3,571.800000000003 883.4,573.400000000003 882.3,575.0000000000031 883.7,576.6000000000031 881.0,578.2000000000031 885.8,579.8000000000031 883.0,581.4000000000032 881.2,583.0000000000032 882.2,584.6000000000032 882.1,586.2000000000032 882.9,587.8000000000033 881.6,589.4000000000033 878.4,591.0000000000033 879.7,592.6000000000033 882.2,594.2000000000033 882.9,595.8000000000034 880.8,597.4000000000034 880.0,599.0000000000034 884.0,600.6000000000034 881.9,602.2000000000035 885.9,603.8000000000035 882.0,605.4000000000035 885.5,607.0000000000035 885.1,608.6000000000035 884.8,610.2000000000036 883.9,611.8000000000036 883.6,613.4000000000036 886.5,615.0000000000036 884.5,616.6000000000037 883.9,618.2000000000037 884.8,619.8000000000037 882.2,621.4000000000037 887.2,623.0000000000038 887.0,624.6000000000038 884.4,626.2000000000038 884.4,627.8000000000038 886.8,629.4000000000038 885.6,631.0000000000039 884.2,632.6000000000039 882.6,634.2000000000039 885.5,635.8000000000039 885.1,637.400000000004 881.3,639.000000000004 883.9,640.600000000004 883.2,642.200000000004 884.1,643.800000000004 881.5,645.4000000000041 882.7,647.0000000000041 882.4,648.6000000000041 883.2,650.2000000000041 884.7,651.8000000000042 884.8,653.4000000000042 881.8,655.0000000000042 883.5,656.6000000000042 885.4,658.2000000000043 886.3,659.8000000000043 881.6,661.4000000000043 880.3,663.0000000000043 882.7,664.6000000000043 885.5,666.2000000000044 885.3,667.8000000000044 885.5,669.4000000000044 882.5,671.0000000000044 883.2,672.6000000000045 881.8,674.2000000000045 883.1,675.8000000000045 885.6,677.4000000000045 884.7,679.0000000000045 882.4,680.6000000000046 888.9,682.2000000000046 883.0,683.8000000000046 883.0,685.4000000000046 884.0,687.0000000000047 881.9,688.6000000000047 881.3,690.2000000000047 886.1,691.8000000000047 886.9,693.4000000000048 884.3,695.0000000000048 882.1,696.6000000000048 884.6,698.2000000000048 884.9,699.8000000000048 888.7,701.4000000000049 884.3,703.0000000000049 885.3,704.6000000000049 882.7,706.2000000000049 884.6,707.800000000005 886.5,709.400000000005 884.3,711.000000000005 881.7,712.600000000005 886.1,714.200000000005 882.2,715.8000000000051 880.5,717.4000000000051 882.4,719.0000000000051 889.4,720.6000000000051 882.8,722.2000000000052 886.4,723.8000000000052 887.0,725.4000000000052 883.1,727.0000000000052 883.4,728.6000000000053 883.9,730.2000000000053 885.4,731.8000000000053 888.3,733.4000000000053 885.3,735.0000000000053 883.3,736.6000000000054 884.0,738.2000000000054 883.2,739.8000000000054 883.0,741.4000000000054 882.8,743.0000000000055 881.5,744.6000000000055 882.6,746.2000000000055 885.1,747.8000000000055 881.5,749.4000000000055 888.6,751.0000000000056 884.1,752.6000000000056 883.9,754.2000000000056 881.9,755.8000000000056 881.6,757.4000000000057 883.4,759.0000000000057 883.3,760.6000000000057 882.5,763.1000000000057 881.4,765.6000000000057 878.9,768.1000000000057 876.4,770.6000000000057 873.9,773.1000000000057 871.1,775.6000000000057 867.3,778.1000000000057 861.2,780.6000000000057 860.0,781"/>
<circle cx="940" cy="65" r="2.6" fill="#000" stroke="#d02020" stroke-width="1.2"/>
<circle cx="940.5" cy="782" r="3.2" fill="none" stroke="#40d040" stroke-width="1.2"/>
<rect x="940" y="0" width="1" height="783" fill="#fff"/><rect x="0" y="782" width="941" height="1" fill="#fff"/>
</svg>
</body></html>
